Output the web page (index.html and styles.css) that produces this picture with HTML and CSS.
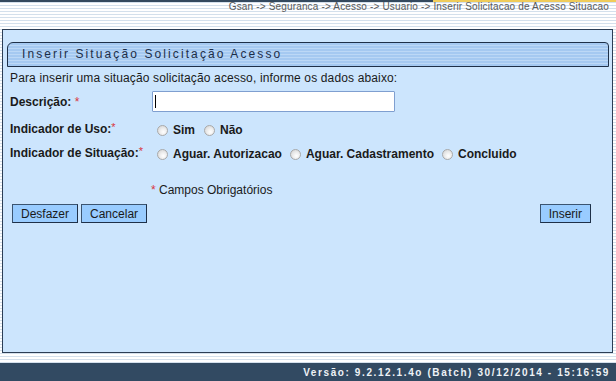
FILE: index.html
```html
<!DOCTYPE html>
<html lang="pt-BR">
<head>
  <meta charset="UTF-8" />
  <title>Inserir Situação Solicitação Acesso</title>
  <link rel="stylesheet" href="styles.css">
</head>
<body>

<div class="header">
  <div class="crumbs">Gsan -&gt; Seguranca -&gt; Acesso -&gt; Usuario -&gt; <span class="current">Inserir Solicitacao de Acesso Situacao</span></div>
</div>

<div class="panel">
  <div class="panel-title">Inserir Situação Solicitação Acesso</div>
  <p class="intro">Para inserir uma situação solicitação acesso, informe os dados abaixo:</p>

  <div class="form-row row-desc">
    <label class="lbl" for="descricao">Descrição: <span class="req">*</span></label>
    <span class="input-wrap">
      <input type="text" id="descricao" class="text-input" />
      <span class="caret"></span>
    </span>
  </div>

  <div class="form-row row-uso">
    <span class="lbl">Indicador de Uso:<span class="req sup">*</span></span>
    <div class="options">
      <label class="opt opt-wide"><input type="radio" name="uso" /> Sim</label>
      <label class="opt opt-wide"><input type="radio" name="uso" /> Não</label>
    </div>
  </div>

  <div class="form-row row-sit">
    <span class="lbl">Indicador de Situação:<span class="req sup">*</span></span>
    <div class="options">
      <label class="opt"><input type="radio" name="sit" />Aguar. Autorizacao</label>
      <label class="opt"><input type="radio" name="sit" />Aguar. Cadastramento</label>
      <label class="opt"><input type="radio" name="sit" />Concluido</label>
    </div>
  </div>

  <p class="required-note"><span class="req">*</span> Campos Obrigatórios</p>

  <div class="actions">
    <div class="actions-left">
      <button class="btn">Desfazer</button>
      <button class="btn">Cancelar</button>
    </div>
    <button class="btn">Inserir</button>
  </div>
</div>

<div class="footer">Versão: 9.2.12.1.4o (Batch) 30/12/2014 - 15:16:59</div>

</body>
</html>
```

FILE: styles.css
```css
body {
  margin: 0;
  padding: 0;
  font-family: 'Liberation Sans', Arial, sans-serif;
  font-size: 12px;
  color: #1a1a1a;
  background: repeating-linear-gradient(to bottom, #ffffff 0, #ffffff 2px, #d4e0ec 2px, #d4e0ec 3px);
  height: 381px;
  overflow: hidden;
}

.header {
  height: 27px;
  border-top: 2px solid #34495e;
  text-align: right;
}

.crumbs {
  font-size: 10px;
  line-height: 10px;
  letter-spacing: 0.16px;
  color: #5a5a5a;
}

.current {
  display: inline-block;
  margin-top: -2px;
  border-top: 2px solid #f0cc5a;
  padding-right: 7px;
}

.panel {
  margin: 0 3px 0 2px;
  border: 1px solid #2c3e55;
  background-color: #cce5fd;
  padding: 12px 3px 0 4px;
  box-sizing: border-box;
  height: 324px;
}

.panel-title {
  height: 23px;
  line-height: 23px;
  border: 1px solid #1e3048;
  border-radius: 6px 4px 0 0;
  background: repeating-linear-gradient(to bottom, #a5c9f1 0, #a5c9f1 2px, #bcd8f6 2px, #bcd8f6 3px);
  padding-left: 14px;
  font-size: 12px;
  letter-spacing: 2.1px;
  color: #1c2e48;
}

.intro {
  margin: 4px 0 0 3px;
  line-height: 14px;
  letter-spacing: 0.14px;
  color: #1a1a1a;
}

.form-row {
  display: flex;
  align-items: flex-start;
  padding-left: 3px;
}

.lbl {
  width: 142px;
  flex-shrink: 0;
  font-weight: 700;
  line-height: 16px;
  color: #1a1a1a;
}

.req {
  color: #d9363e;
  font-weight: 400;
}

.req.sup {
  font-size: 11px;
  vertical-align: 2px;
}

.row-desc {
  margin-top: 6px;
  align-items: center;
  height: 21px;
}

.input-wrap {
  position: relative;
  display: inline-block;
}

.text-input {
  display: block;
  width: 243px;
  height: 21px;
  box-sizing: border-box;
  border: 1px solid #7f9fd0;
  border-radius: 1px;
  background: #fff;
  outline: none;
  padding: 0 3px;
  font-family: 'Liberation Sans', Arial, sans-serif;
}

.caret {
  position: absolute;
  left: 3px;
  top: 4px;
  width: 1px;
  height: 13px;
  background: #000;
}

.row-uso {
  margin-top: 7px;
}

.row-sit {
  margin-top: 5px;
}

.row-uso .options {
  padding-top: 3px;
}

.row-sit .options {
  padding-top: 3px;
}

.options {
  display: flex;
  padding-left: 5px;
}

.opt {
  display: flex;
  align-items: center;
  font-weight: 700;
  line-height: 16px;
  margin-right: 8px;
  color: #1a1a1a;
}

.opt-wide {
  margin-right: 9px;
}

.opt input {
  appearance: none;
  -webkit-appearance: none;
  width: 11px;
  height: 11px;
  margin: 0 5px 0 0;
  border: 1px solid #a9a9a9;
  border-radius: 50%;
  background: radial-gradient(circle at 60% 65%, #ffffff 0, #eeeeee 40%, #cfcfcf 100%);
  box-sizing: border-box;
}

.required-note {
  margin: 21px 0 0 144px;
  line-height: 14px;
  color: #1a1a1a;
}

.actions {
  display: flex;
  justify-content: space-between;
  margin: 7px 18px 0 5px;
}

.actions-left {
  display: flex;
  gap: 3px;
}

.btn {
  height: 19px;
  padding: 0 8px;
  font-family: 'Liberation Sans', Arial, sans-serif;
  font-size: 12px;
  color: #1a1a1a;
  background-color: #99ccff;
  border: 1px solid;
  border-color: #3b5470 #1e3048 #1e3048 #3b5470;
  cursor: pointer;
}

.footer {
  margin-top: 10px;
  height: 19px;
  background-color: #324a62;
  color: #eef2f6;
  font-size: 10px;
  font-weight: 700;
  letter-spacing: 1.6px;
  line-height: 19px;
  text-align: right;
  padding-right: 6px;
}
```
